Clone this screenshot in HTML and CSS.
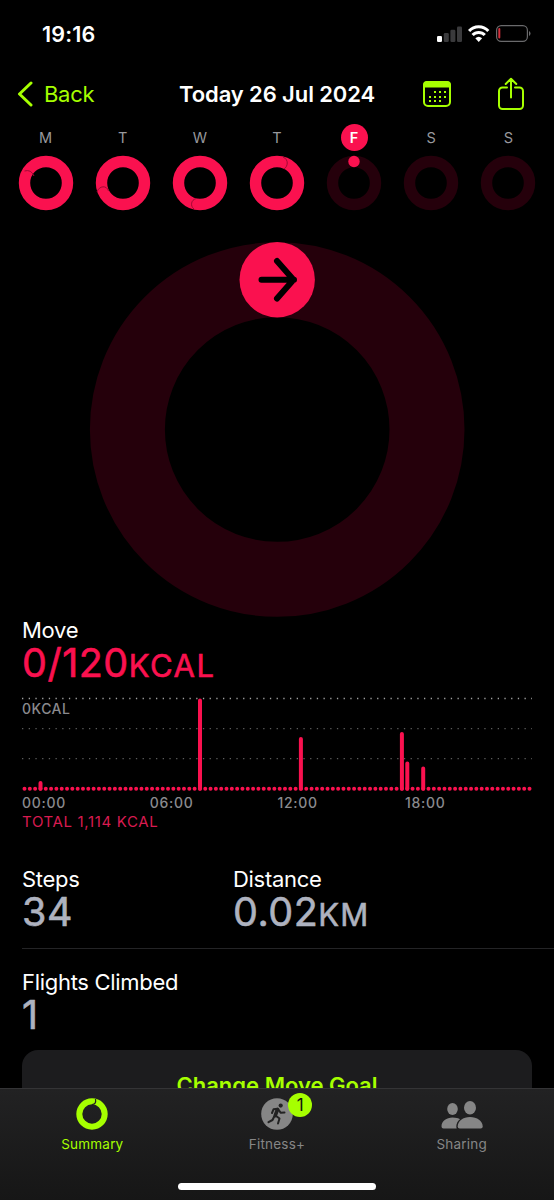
FILE: index.html
```
<!DOCTYPE html>
<html lang="en">
<head>
    <meta charset="UTF-8">
    <meta name="viewport" content="width=device-width, initial-scale=1.0">
    <title>Activity</title>
    <link rel="stylesheet" href="styles.css">
</head>
<body>
    <div class="phone">
        <header class="status-bar">
            <span class="time">19:16</span>
            <svg class="status-icons" width="96" height="20" viewBox="0 0 96 20">
                <rect x="1" y="12" width="5" height="6" rx="1.3" fill="#fff"/>
                <rect x="7.8" y="9" width="5" height="9" rx="1.3" fill="#3a3a3c"/>
                <rect x="14.4" y="5.8" width="5" height="12.2" rx="1.3" fill="#3a3a3c"/>
                <rect x="21" y="2.5" width="5" height="15.5" rx="1.3" fill="#3a3a3c"/>
                <g fill="none" stroke="#fff" stroke-width="3">
                    <path d="M33.1 7.1a13 13 0 0 1 19.2 0"/>
                    <path d="M36.6 11.1a8.3 8.3 0 0 1 12.2 0"/>
                </g>
                <path d="M39.3 14.3a5 5 0 0 1 6.8 0L42.7 18z" fill="#fff"/>
                <rect x="60.6" y="1.6" width="30.8" height="15.8" rx="4.6" fill="none" stroke="#6a6a6c" stroke-width="1.2"/>
                <rect x="62.3" y="4" width="2" height="10.5" rx="1" fill="#d5303c"/>
                <path d="M93 7v5a2.8 2.8 0 0 0 0-5z" fill="#6a6a6c"/>
            </svg>
        </header>

        <nav class="nav-bar">
            <a class="back">
                <svg width="16" height="26" viewBox="0 0 16 26"><path d="M14 2 2.5 13 14 24" fill="none" stroke="#a6ff00" stroke-width="3" stroke-linecap="round" stroke-linejoin="round"/></svg>
                <span>Back</span>
            </a>
            <h1 class="title">Today 26 Jul 2024</h1>
            <svg class="calendar" width="30" height="28" viewBox="0 0 30 28">
                <rect x="2" y="2" width="26" height="24" rx="4" fill="none" stroke="#a6ff00" stroke-width="2"/>
                <path d="M1 7.5V5a4 4 0 0 1 4-4h20a4 4 0 0 1 4 4v2.5z" fill="#a6ff00"/>
                <path d="M12 12h12M7 17h17M7 21h12" fill="none" stroke="#a6ff00" stroke-width="2" stroke-dasharray="2 3"/>
            </svg>
            <svg class="share" width="28" height="36" viewBox="0 0 28 36">
                <path d="M10 11.5H5.500A3.500 3.500 0 0 0 2 15v14.500A3.500 3.500 0 0 0 5.500 33h17a3.500 3.500 0 0 0 3.500-3.500V15a3.500 3.500 0 0 0-3.500-3.500H18M14 21.500V3M8.700 8 14 2.700 19.300 8" fill="none" stroke="#a6ff00" stroke-width="2" stroke-linecap="round" stroke-linejoin="round"/>
            </svg>
        </nav>

        <section class="week">
            <div class="day">
                <span class="letter">M</span>
                <svg class="mini" viewBox="0 0 56 56"><circle class="full" cx="28" cy="28" r="21.5"/><path class="cap" d="M6.500 16q6.500-2 9.500 5"/></svg>
            </div>
            <div class="day">
                <span class="letter">T</span>
                <svg class="mini" viewBox="0 0 56 56"><circle class="full" cx="28" cy="28" r="21.5"/><path class="cap" d="M2 37c2-6.500 10-7 11.500-1"/></svg>
            </div>
            <div class="day">
                <span class="letter">W</span>
                <svg class="mini" viewBox="0 0 56 56"><circle class="full" cx="28" cy="28" r="21.5"/><path class="cap" d="M22 54c-4-3-3-9 2-10.500"/></svg>
            </div>
            <div class="day">
                <span class="letter">T</span>
                <svg class="mini" viewBox="0 0 56 56"><circle class="full" cx="28" cy="28" r="21.5"/><path class="cap" d="M34 2c6 2.500 5 9.500 1 12"/></svg>
            </div>
            <div class="day">
                <span class="letter today">F</span>
                <svg class="mini" viewBox="0 0 56 56"><circle class="empty" cx="28" cy="28" r="21.5"/><circle cx="28" cy="6.500" r="5.700" fill="#fa114f"/></svg>
            </div>
            <div class="day">
                <span class="letter">S</span>
                <svg class="mini" viewBox="0 0 56 56"><circle class="empty" cx="28" cy="28" r="21.5"/></svg>
            </div>
            <div class="day">
                <span class="letter">S</span>
                <svg class="mini" viewBox="0 0 56 56"><circle class="empty" cx="28" cy="28" r="21.5"/></svg>
            </div>
        </section>

        <section class="ring">
            <svg width="376" height="376" viewBox="0 0 376 376">
                <circle cx="188.200" cy="187.500" r="149.800" fill="none" stroke="#25000b" stroke-width="75"/>
                <circle cx="188.200" cy="37.700" r="37.700" fill="#fa114f"/>
                <path d="M172.500 37.700H205M188 19l16.500 18.700L188 56.500" fill="none" stroke="#000" stroke-width="6" stroke-linecap="round" stroke-linejoin="round"/>
            </svg>
        </section>

        <section class="move">
            <h2 class="label">Move</h2>
            <p class="value pink">0/120<small>KCAL</small></p>
            <div class="chart">
                <svg width="512" height="98" viewBox="0 0 512 98">
                    <g stroke-width="1.300" stroke-dasharray="1.300 5.400">
                        <path d="M0 4.500H510" stroke="#a0a0a0"/>
                        <path d="M0 34.700H510" stroke="#5c5c5c"/>
                        <path d="M0 64.700H510" stroke="#5c5c5c"/>
                    </g>
                    <g stroke="#fa114f" stroke-width="4" stroke-linecap="round">
                        <path d="M2.500 94.800H508" stroke-dasharray="0 5.316"/>
                        <path d="M18.500 94.800V89M178 94.800V6.500M278.900 94.800V45M379.900 94.800V40M385.300 94.800V69.500M401.200 94.800V74.500"/>
                    </g>
                </svg>
                <span class="peak">0KCAL</span>
            </div>
            <div class="hours">
                <span>00:00</span><span>06:00</span><span>12:00</span><span>18:00</span>
            </div>
            <p class="total">TOTAL 1,114 KCAL</p>
        </section>

        <section class="stats">
            <div class="stat">
                <h2 class="label">Steps</h2>
                <p class="value">34</p>
            </div>
            <div class="stat">
                <h2 class="label">Distance</h2>
                <p class="value">0.02<small>KM</small></p>
            </div>
        </section>
        <section class="stats flights">
            <div class="stat">
                <h2 class="label">Flights Climbed</h2>
                <p class="value">1</p>
            </div>
        </section>

        <button class="goal">Change Move Goal</button>

        <footer class="tab-bar">
            <div class="tabs">
                <a class="tab active">
                    <svg width="34" height="34" viewBox="0 0 34 34"><circle cx="17" cy="17" r="12.700" fill="none" stroke="#a6ff00" stroke-width="6"/><path d="M17 7.500q4.500 0 3.500-5.500" fill="none" stroke="#222" stroke-width="1.200"/></svg>
                    <span>Summary</span>
                </a>
                <a class="tab">
                    <svg width="34" height="34" viewBox="0 0 34 34">
                        <circle cx="17" cy="17" r="15.800" fill="#868686"/>
                        <circle cx="20.700" cy="8.600" r="2.100" fill="#222"/>
                        <path d="M17.500 12.500l-2.300 6.200" fill="none" stroke="#222" stroke-width="3.600" stroke-linecap="round"/>
                        <path d="M12 16l1.500-3.700 4.300-.5 3 4 3.700-.3M15.500 18.500l4 3-1.500 5M14.200 19.500l-1.700 3.500-4 2.200" fill="none" stroke="#222" stroke-width="2" stroke-linecap="round" stroke-linejoin="round"/>
                    </svg>
                    <span class="badge">1</span>
                    <span>Fitness+</span>
                </a>
                <a class="tab">
                    <svg width="44" height="34" viewBox="0 0 44 34" fill="#868686">
                        <ellipse cx="12.500" cy="12" rx="5.300" ry="6"/>
                        <path d="M1.500 29.500c0-5.500 5-9 11-9 3.500 0 6 .8 7.500 1.800-2.500 2-3.700 4.500-3.700 7 0 .9.200 1.700.4 2.200H3.500a2 2 0 0 1-2-2z"/>
                        <ellipse cx="30" cy="10.700" rx="6" ry="6.800"/>
                        <path d="M17.700 29.500c0-5.500 5.300-9.500 12.300-9.500s12.700 4 12.700 9.500a2 2 0 0 1-2 2h-21a2 2 0 0 1-2-2z"/>
                    </svg>
                    <span>Sharing</span>
                </a>
            </div>
            <div class="home-indicator"></div>
        </footer>
    </div>
</body>
</html>
```
FILE: styles.css
```
* {
    box-sizing: border-box;
}

body {
    margin: 0;
    background: #000;
    color: #fff;
    font-family: Inter, "Liberation Sans", sans-serif;
}

h1, h2, p {
    margin: 0;
}

.phone {
    position: relative;
    width: 554px;
    height: 1200px;
    overflow: hidden;
    display: flex;
    flex-direction: column;
    background: #000;
}

.status-bar {
    display: flex;
    justify-content: space-between;
    align-items: center;
    height: 67px;
    padding: 0 22px 0 42px;
}

.time {
    font-size: 21.5px;
    font-weight: 600;
    letter-spacing: 0.2px;
}

.nav-bar {
    display: flex;
    align-items: center;
    height: 54px;
    padding: 0 28px 0 17px;
}

.back {
    display: flex;
    align-items: center;
    gap: 11px;
    width: 162px;
    color: #a6ff00;
    font-size: 22px;
    letter-spacing: -0.3px;
}

.title {
    width: 243px;
    font-size: 22px;
    font-weight: 600;
    letter-spacing: -0.1px;
    white-space: nowrap;
}

.share {
    margin-left: 45px;
}

.week {
    display: flex;
    height: 121px;
    padding: 3px 7px 0;
}

.day {
    flex: 1;
    display: flex;
    flex-direction: column;
    align-items: center;
}

.letter {
    width: 27px;
    height: 27px;
    line-height: 28px;
    border-radius: 50%;
    text-align: center;
    font-size: 14.5px;
    font-weight: 400;
    color: #98989d;
}

.today {
    background: #fa114f;
    color: #fff;
    font-weight: 600;
}

.mini {
    width: 56px;
    height: 56px;
    margin-top: 4px;
}

.mini .full, .mini .empty {
    fill: none;
    stroke: #fa114f;
    stroke-width: 11.4;
}

.mini .empty {
    stroke: #25000b;
}

.mini .cap {
    fill: none;
    stroke: #a00a34;
    stroke-width: 1;
}

.ring {
    display: flex;
    justify-content: center;
    height: 375px;
}

.move {
    height: 249px;
    padding-left: 22px;
}

.label {
    height: 27px;
    line-height: 27px;
    font-size: 22px;
    font-weight: 400;
    letter-spacing: -0.3px;
}

.value {
    height: 38px;
    line-height: 39px;
    font-size: 39.5px;
    font-weight: 400;
    letter-spacing: 0.5px;
    color: #aeb2bf;
    -webkit-text-stroke: 0.6px;
}

.value small {
    font-size: 31px;
    letter-spacing: 1px;
}

.pink {
    color: #fa114f;
}

.pink small {
    letter-spacing: 1.5px;
}

.chart {
    position: relative;
    height: 98px;
    margin-top: 12px;
}

.chart svg {
    display: block;
}

.peak {
    position: absolute;
    top: 6px;
    left: 0;
    font-size: 14px;
    font-weight: 500;
    letter-spacing: 0.5px;
    color: #8a8a8e;
}

.hours {
    display: flex;
    height: 20px;
    line-height: 22px;
    font-size: 14px;
    font-weight: 500;
    letter-spacing: 0.7px;
    color: #8a8a8e;
}

.hours span {
    width: 127.7px;
}

.total {
    line-height: 19px;
    font-size: 15px;
    letter-spacing: 0.65px;
    color: #d81b50;
}

.stats {
    display: flex;
    height: 83px;
    margin-left: 22px;
    border-bottom: 1px solid #242426;
}

.stat {
    width: 211px;
}

.flights {
    height: 81px;
    margin-top: 20px;
    border: none;
}

.goal {
    flex: none;
    width: 510px;
    height: 80px;
    margin: 0 0 0 22px;
    padding: 0 0 11px;
    border: none;
    border-radius: 16px;
    background: #1c1c1e;
    color: #a6ff00;
    font: 600 22px/26px Inter, "Liberation Sans", sans-serif;
}

/* bottom bar lies over the scrolling content */
.tab-bar {
    position: absolute;
    left: 0;
    bottom: 0;
    width: 100%;
    height: 112px;
    border-top: 1px solid #343436;
    background: linear-gradient(#222223, #161616);
}

.tabs {
    display: flex;
    padding-top: 8px;
}

.tab {
    position: relative;
    flex: 1;
    display: flex;
    flex-direction: column;
    align-items: center;
    gap: 5px;
    color: #868686;
    font-size: 13.5px;
    font-weight: 400;
    letter-spacing: 0.2px;
    line-height: 17px;
}

.active {
    color: #a6ff00;
}

.badge {
    position: absolute;
    top: -4px;
    left: 103.5px;
    width: 24px;
    height: 24px;
    border-radius: 50%;
    background: #a6ff00;
    color: #111;
    font-size: 17px;
    font-weight: 400;
    line-height: 24px;
    text-align: center;
    letter-spacing: 0;
}

.home-indicator {
    width: 198px;
    height: 7px;
    margin: 30px auto 0;
    border-radius: 4px;
    background: #fff;
}
```
